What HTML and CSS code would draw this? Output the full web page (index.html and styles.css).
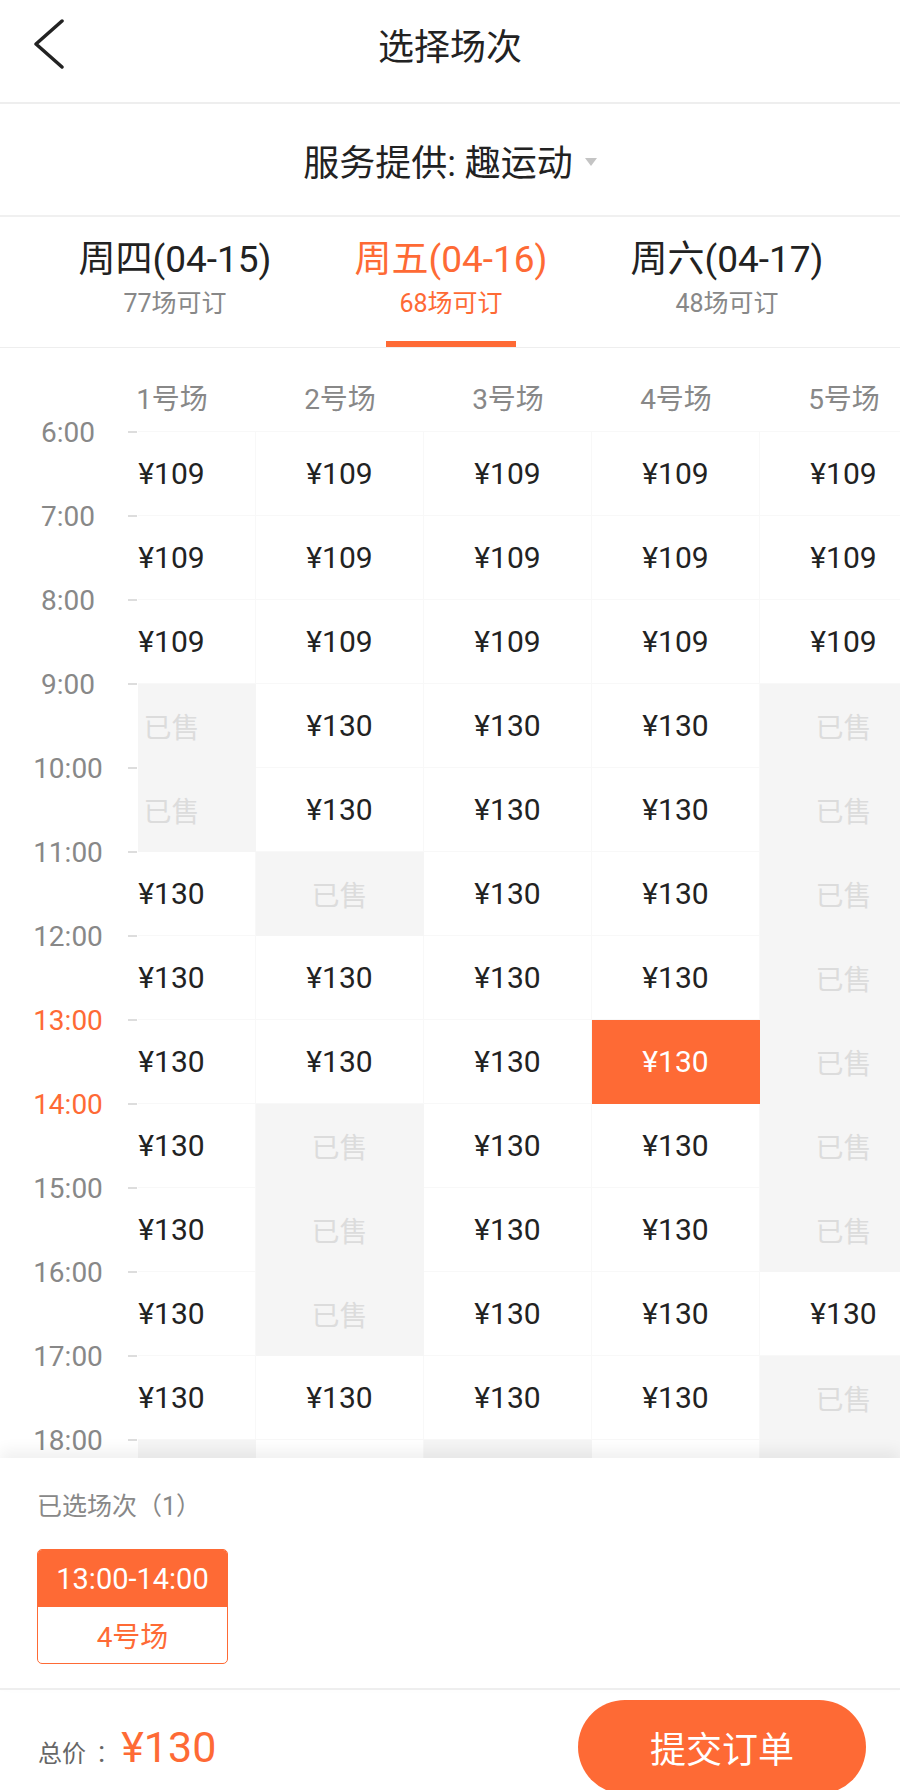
FILE: index.html
```html
<!DOCTYPE html>
<html>
<head>
  <meta charset="utf-8">
  <meta name="viewport" content="width=device-width">
  <title>选择场次</title>
  <link rel="stylesheet" href="styles.css">
</head>
<body>
  <div class="page">
    <header class="topbar">
      <a class="back" href="#">
        <svg width="30" height="50" viewBox="0 0 30 50"><polyline points="28,2 2,25 28,48" fill="none" stroke="#222" stroke-width="3.5" stroke-linecap="round" stroke-linejoin="round"/></svg>
      </a>
      <h1 class="title">选择场次</h1>
      <span></span>
    </header>

    <div class="provider">服务提供: 趣运动<span class="caret"></span></div>

    <nav class="days">
      <div class="day"><span class="day-name">周四(04-15)</span><span class="day-count">77场可订</span></div>
      <div class="day active"><span class="day-name">周五(04-16)</span><span class="day-count">68场可订</span></div>
      <div class="day"><span class="day-name">周六(04-17)</span><span class="day-count">48场可订</span></div>
    </nav>

    <section class="board">
      <div class="times">
        <div class="time"><span>6:00</span></div>
        <div class="time"><span>7:00</span></div>
        <div class="time"><span>8:00</span></div>
        <div class="time"><span>9:00</span></div>
        <div class="time"><span>10:00</span></div>
        <div class="time"><span>11:00</span></div>
        <div class="time"><span>12:00</span></div>
        <div class="time now"><span>13:00</span></div>
        <div class="time now"><span>14:00</span></div>
        <div class="time"><span>15:00</span></div>
        <div class="time"><span>16:00</span></div>
        <div class="time"><span>17:00</span></div>
        <div class="time"><span>18:00</span></div>
      </div>

      <div class="courts">
        <div class="court-name">1号场</div>
        <div class="court-name">2号场</div>
        <div class="court-name">3号场</div>
        <div class="court-name">4号场</div>
        <div class="court-name">5号场</div>

        <!-- 6:00 -->
        <div class="cell">¥109</div>
        <div class="cell">¥109</div>
        <div class="cell">¥109</div>
        <div class="cell">¥109</div>
        <div class="cell">¥109</div>
        <!-- 7:00 -->
        <div class="cell">¥109</div>
        <div class="cell">¥109</div>
        <div class="cell">¥109</div>
        <div class="cell">¥109</div>
        <div class="cell">¥109</div>
        <!-- 8:00 -->
        <div class="cell">¥109</div>
        <div class="cell">¥109</div>
        <div class="cell">¥109</div>
        <div class="cell">¥109</div>
        <div class="cell">¥109</div>
        <!-- 9:00 -->
        <div class="cell sold">已售</div>
        <div class="cell">¥130</div>
        <div class="cell">¥130</div>
        <div class="cell">¥130</div>
        <div class="cell sold">已售</div>
        <!-- 10:00 -->
        <div class="cell sold">已售</div>
        <div class="cell">¥130</div>
        <div class="cell">¥130</div>
        <div class="cell">¥130</div>
        <div class="cell sold">已售</div>
        <!-- 11:00 -->
        <div class="cell">¥130</div>
        <div class="cell sold">已售</div>
        <div class="cell">¥130</div>
        <div class="cell">¥130</div>
        <div class="cell sold">已售</div>
        <!-- 12:00 -->
        <div class="cell">¥130</div>
        <div class="cell">¥130</div>
        <div class="cell">¥130</div>
        <div class="cell">¥130</div>
        <div class="cell sold">已售</div>
        <!-- 13:00 -->
        <div class="cell">¥130</div>
        <div class="cell">¥130</div>
        <div class="cell">¥130</div>
        <div class="cell picked">¥130</div>
        <div class="cell sold">已售</div>
        <!-- 14:00 -->
        <div class="cell">¥130</div>
        <div class="cell sold">已售</div>
        <div class="cell">¥130</div>
        <div class="cell">¥130</div>
        <div class="cell sold">已售</div>
        <!-- 15:00 -->
        <div class="cell">¥130</div>
        <div class="cell sold">已售</div>
        <div class="cell">¥130</div>
        <div class="cell">¥130</div>
        <div class="cell sold">已售</div>
        <!-- 16:00 -->
        <div class="cell">¥130</div>
        <div class="cell sold">已售</div>
        <div class="cell">¥130</div>
        <div class="cell">¥130</div>
        <div class="cell">¥130</div>
        <!-- 17:00 -->
        <div class="cell">¥130</div>
        <div class="cell">¥130</div>
        <div class="cell">¥130</div>
        <div class="cell">¥130</div>
        <div class="cell sold">已售</div>
        <!-- 18:00, hidden under the panel -->
        <div class="cell sold"></div>
        <div class="cell"></div>
        <div class="cell sold"></div>
        <div class="cell"></div>
        <div class="cell sold"></div>
      </div>
    </section>

    <section class="picked-panel">
      <div class="picked-title">已选场次（1）</div>
      <div class="ticket">
        <div class="ticket-time">13:00-14:00</div>
        <div class="ticket-court">4号场</div>
      </div>
    </section>

    <footer class="checkout">
      <div class="total"><span class="total-label">总价</span><span class="total-colon">:</span><span class="total-price">¥130</span></div>
      <button class="submit" type="button">提交订单</button>
    </footer>
  </div>
</body>
</html>
```

FILE: styles.css
```css
:root {
  --orange: #fe6a35;
  --text: #222;
  --muted: #888;
  --line: #eeeeee;
}

* {
  box-sizing: border-box;
}

body {
  margin: 0;
  font-family: Roboto, "Noto Sans CJK SC", sans-serif;
  color: var(--text);
  background: #fff;
}

.page {
  width: 900px;
  height: 1790px;
  overflow: hidden;
}

/* top bar */
.topbar {
  display: grid;
  grid-template-columns: 1fr auto 1fr;
  align-items: center;
  height: 104px;
  padding-bottom: 14px;
  border-bottom: 2px solid var(--line);
}

.back {
  display: flex;
  margin-left: 34px;
}

.title {
  margin: 0;
  font-size: 36px;
  font-weight: normal;
  color: var(--text);
}

.provider {
  display: flex;
  align-items: center;
  justify-content: center;
  height: 113px;
  font-size: 36px;
  border-bottom: 2px solid #f0f0f0;
}

.caret {
  margin-left: 12px;
  margin-top: 4px;
  border-left: 6px solid transparent;
  border-right: 6px solid transparent;
  border-top: 8px solid #c4c4c4;
}

/* date tabs */
.days {
  display: flex;
  height: 131px;
  padding-left: 37px;
  border-bottom: 1px solid var(--line);
  overflow: hidden;
}

.day {
  flex: 0 0 276px;
  display: flex;
  flex-direction: column;
  align-items: center;
  padding-top: 20px;
}

.day-name {
  font-size: 37px;
  line-height: 46px;
}

.day-count {
  margin-top: 6px;
  font-size: 25px;
  line-height: 30px;
  color: var(--muted);
}

.day.active .day-name,
.day.active .day-count {
  color: var(--orange);
}

.day.active::after {
  content: "";
  width: 130px;
  height: 6px;
  margin-top: auto;
  background: var(--orange);
}

/* schedule board */
.board {
  display: flex;
  height: 1110px;
  overflow: hidden;
}

.times {
  flex: 0 0 138px;
  position: relative;
  z-index: 1;
  padding-top: 42px;
  background: #fff;
}

.time {
  display: flex;
  align-items: center;
  height: 84px;
}

.time span {
  width: 100px;
  margin-left: 18px;
  text-align: center;
  font-size: 28px;
  color: var(--muted);
}

.time::after {
  content: "";
  width: 9px;
  height: 2px;
  margin-left: 10px;
  background: #dddddd;
}

.time.now span {
  color: var(--orange);
}

.courts {
  flex: 0 0 auto;
  margin-left: -50px;
  display: grid;
  grid-template-columns: repeat(5, 168px);
  grid-auto-rows: 84px;
}

.court-name {
  padding-top: 20px;
  line-height: 64px;
  text-align: center;
  font-size: 28px;
  color: var(--muted);
  border-bottom: 1px solid #f8f8f8;
}

.cell {
  display: flex;
  align-items: center;
  justify-content: center;
  font-size: 30px;
  color: var(--text);
  border-right: 1px solid #f8f8f8;
  border-bottom: 1px solid #f8f8f8;
}

.cell.sold {
  background: #f5f5f5;
  border-color: #f5f5f5;
  color: #dcdcdc;
  font-size: 28px;
}

.cell.picked {
  background: var(--orange);
  border-color: var(--orange);
  color: #fff;
}

/* selected sessions */
.picked-panel {
  position: relative;
  z-index: 2;
  padding: 34px 0 24px 37px;
  background: #fff;
  border-bottom: 2px solid var(--line);
  box-shadow: 0 -8px 14px rgba(0, 0, 0, 0.06);
}

.picked-title {
  font-size: 25px;
  line-height: 30px;
  color: var(--muted);
}

.ticket {
  display: flex;
  flex-direction: column;
  width: 191px;
  height: 115px;
  margin-top: 27px;
  border: 1.5px solid var(--orange);
  border-radius: 5px;
  overflow: hidden;
}

.ticket-time {
  display: flex;
  align-items: center;
  justify-content: center;
  height: 57px;
  background: var(--orange);
  color: #fff;
  font-size: 29px;
}

.ticket-court {
  flex: 1;
  display: flex;
  align-items: center;
  justify-content: center;
  color: var(--orange);
  font-size: 28px;
}

/* checkout bar */
.checkout {
  display: flex;
  justify-content: space-between;
  align-items: flex-start;
  padding: 10px 34px 0 38px;
}

.total {
  display: flex;
  align-items: baseline;
  line-height: 94px;
}

.total-label {
  font-size: 24px;
  color: #666;
}

.total-colon {
  margin: 0 16px 0 12px;
  font-size: 30px;
  color: #666;
}

.total-price {
  font-size: 43px;
  color: var(--orange);
}

.submit {
  width: 288px;
  height: 94px;
  border: none;
  border-radius: 47px;
  background: var(--orange);
  color: #fff;
  font-family: inherit;
  font-size: 36px;
}
```
